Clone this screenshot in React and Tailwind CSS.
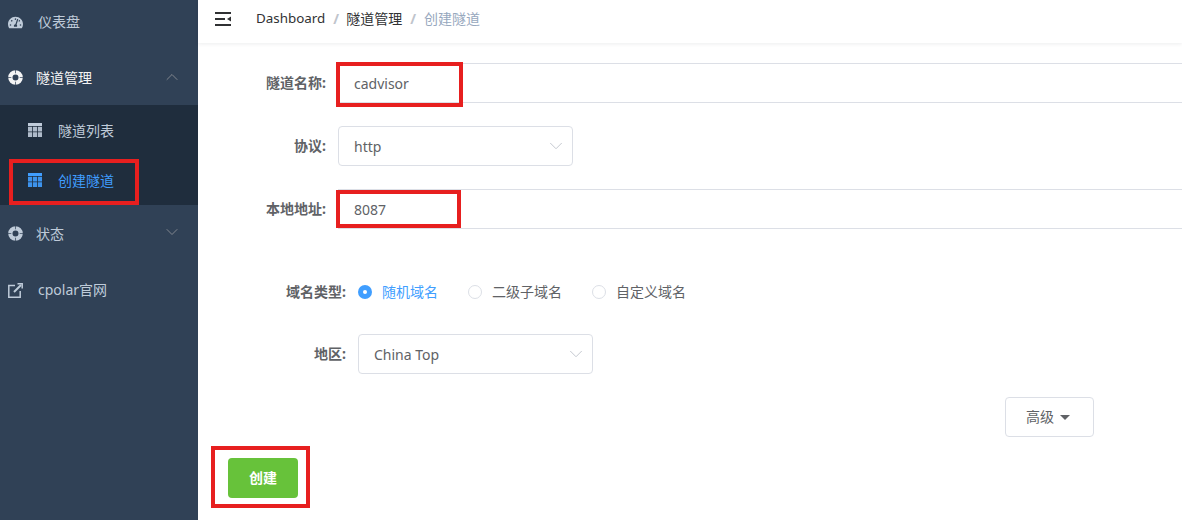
import { FaTachometerAlt } from 'react-icons/fa';
import { ChevronDown, ChevronUp } from 'lucide-react';

const fontStack = { fontFamily: '"Noto Sans", "Noto Sans CJK SC", sans-serif' };

function TableIcon({ className }) {
  return (
    <svg viewBox="0 0 14 14" className={className} fill="currentColor">
      <path d="M0 0h14v3H0z" />
      <path opacity="0.9" d="M0 3.700h4.200v4.700H0zM5 3.700h4v4.700H5zM9.800 3.700H14v4.700H9.800zM0 9.200h4.200V14H0zM5 9.200h4V14H5zM9.800 9.200H14V14H9.800z" />
    </svg>
  );
}

function RingIcon({ className, cut }) {
  return (
    <svg viewBox="0 0 16 16" className={className}>
      <circle cx="8" cy="8" r="5.500" fill="none" stroke="currentColor" strokeWidth="4.600" />
      <path d="M8 0v3.500M8 12.500V16M0 8h3.500M12.500 8H16" stroke={cut} strokeWidth="1" opacity="0.75" />
    </svg>
  );
}

function ExternalIcon({ className }) {
  return (
    <svg viewBox="0 0 15 15" className={className} fill="none" stroke="currentColor" strokeWidth="1.500">
      <path d="M7 2.500H.8v11.700h11.400V8" />
      <path d="M6 9l7-7" strokeWidth="2" />
      <path d="M9.500.800h4.700v4.700" />
    </svg>
  );
}

function FoldIcon() {
  return (
    <svg viewBox="0 0 16 14" className="w-4 h-[14px] text-[#303133]" fill="currentColor">
      <path d="M0 0h16v2H0zM0 6h10v2H0zM0 12h16v2H0z" />
      <path d="M16 4.500v5l-4-2.500z" />
    </svg>
  );
}

function Sidebar() {
  return (
    <aside className="relative w-[198px] shrink-0 h-[520px] bg-[#304156] text-sm text-[#bfcbd9]">
      <div className="h-[50px] pb-[6px] pl-2 flex items-center">
        <FaTachometerAlt className="w-[15px] h-[15px] text-[#bfcbd9]" />
        <span className="ml-[15px]">仪表盘</span>
      </div>
      <div className="h-[55px] pl-2 pr-4 flex items-center text-[#f4f4f5]">
        <RingIcon className="w-[15px] h-[15px]" cut="#304156" />
        <span className="ml-[13px] flex-1">隧道管理</span>
        <ChevronUp className="w-5 h-5 text-[#909399] -mt-px" strokeWidth={1} />
      </div>
      <div className="bg-[#1f2d3d]">
        <div className="h-[50px] pl-7 flex items-center">
          <TableIcon className="w-[14px] h-[14px]" />
          <span className="ml-4 pt-[2px]">隧道列表</span>
        </div>
        <div className="h-[50px] pl-7 flex items-center text-[#409eff]">
          <TableIcon className="w-[14px] h-[14px]" />
          <span className="ml-4 pt-[2px]">创建隧道</span>
        </div>
      </div>
      <div className="h-[57px] pl-2 pr-4 flex items-center">
        <RingIcon className="w-[15px] h-[15px]" cut="#304156" />
        <span className="ml-[13px] flex-1">状态</span>
        <ChevronDown className="w-5 h-5 text-[#909399] -mt-[3px]" strokeWidth={1} />
      </div>
      <div className="h-[56px] pl-2 flex items-center">
        <ExternalIcon className="w-[15px] h-[15px]" />
        <span className="ml-[15px]">cpolar官网</span>
      </div>
      <div className="absolute left-[9px] top-[159px] w-[130px] h-[46px] border-4 border-[#e71f1f]" />
    </aside>
  );
}

function FormRow({ label, labelWidth = 'w-[128px]', children, className }) {
  return (
    <div className={`flex items-center ${className}`}>
      <label className={`${labelWidth} text-right text-sm font-bold text-[#606266]`}>{label}:</label>
      <div className="ml-3 flex-1 flex items-center">{children}</div>
    </div>
  );
}

function TextBox({ value }) {
  return (
    <div className="w-full h-10 border-y border-[#dcdfe6] pl-4 pt-px flex items-center text-sm text-[#606266]">{value}</div>
  );
}

function SelectBox({ value }) {
  return (
    <div className="w-[235px] h-10 border border-[#dcdfe6] rounded pl-[15px] pr-[5px] flex items-center justify-between text-sm text-[#606266]">
      <span className="pt-px">{value}</span>
      <ChevronDown className="w-[22px] h-[22px] text-[#c0c4cc]" strokeWidth={1} />
    </div>
  );
}

function Radio({ label, checked, className }) {
  return (
    <div className={`flex items-center ${className}`}>
      {checked ? (
        <span className="w-[14px] h-[14px] rounded-full bg-[#409eff] flex items-center justify-center">
          <span className="w-1 h-1 rounded-full bg-white" />
        </span>
      ) : (
        <span className="w-[14px] h-[14px] rounded-full border border-[#dcdfe6]" />
      )}
      <span className={`ml-[10px] text-sm ${checked ? 'text-[#409eff]' : 'text-[#606266]'}`}>{label}</span>
    </div>
  );
}

export default function App() {
  return (
    <div className="flex w-[1182px] h-[520px] overflow-hidden bg-white" style={fontStack}>
      <Sidebar />
      <main className="relative flex-1 min-w-0">
        <header className="h-[43px] pl-[17px] flex items-center shadow-[0_1px_4px_rgba(0,21,41,0.08)]">
          <div className="-mt-[5px]"><FoldIcon /></div>
          <nav className="ml-[25px] -mt-[5px] flex items-center text-sm text-[#303133]">
            <span className="text-[13.4px]">Dashboard</span>
            <span className="ml-2 mr-[7px] text-[#c0c4cc] font-bold">/</span>
            <span>隧道管理</span>
            <span className="mx-2 text-[#c0c4cc] font-bold">/</span>
            <span className="text-[#97a8be]">创建隧道</span>
          </nav>
        </header>

        <div className="pt-5">
          <FormRow label="隧道名称"><TextBox value="cadvisor" /></FormRow>
          <FormRow label="协议" className="mt-[23px]"><SelectBox value="http" /></FormRow>
          <FormRow label="本地地址" className="mt-[23px]"><TextBox value="8087" /></FormRow>
          <FormRow label="域名类型" labelWidth="w-[148px]" className="mt-[53px] h-5">
            <Radio label="随机域名" checked />
            <Radio label="二级子域名" className="ml-[30px]" />
            <Radio label="自定义域名" className="ml-[30px]" />
          </FormRow>
          <FormRow label="地区" labelWidth="w-[148px]" className="mt-[32px]"><SelectBox value="China Top" /></FormRow>
          <div className="mt-[23px] pr-[88px] flex justify-end">
            <button className="w-[89px] h-10 border border-[#dcdfe6] rounded pr-[3px] flex items-center justify-center text-sm text-[#606266]">
              高级
              <span className="ml-[6px] w-0 h-0 border-x-[5px] border-x-transparent border-t-[5px] border-t-[#606266]" />
            </button>
          </div>
          <div className="mt-[21px] pl-[30px]">
            <button className="w-[70px] h-10 rounded bg-[#67c23a] text-white text-sm font-bold">创建</button>
          </div>
        </div>

        <div className="absolute left-[138px] top-[62px] w-[127px] h-[45px] border-4 border-[#e71f1f]" />
        <div className="absolute left-[138px] top-[190px] w-[125px] h-[38px] border-4 border-[#e71f1f]" />
        <div className="absolute left-[13px] top-[446px] w-[99px] h-[62px] border-4 border-[#e71f1f]" />
      </main>
    </div>
  );
}
